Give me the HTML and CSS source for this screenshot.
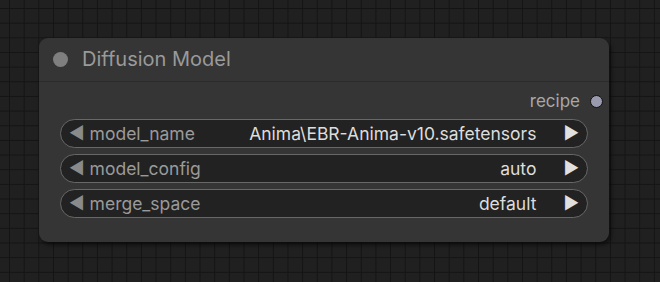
FILE: index.html
```html
<!DOCTYPE html>
<html>
<head>
<meta charset="utf-8">
<link rel="stylesheet" href="styles.css">
</head>
<body>
<div class="canvas">
  <div class="node">
    <div class="node-title">
      <span class="title-dot"></span>
      <span class="title-text">Diffusion Model</span>
    </div>
    <div class="node-body">
      <div class="output-row">
        <span class="output-label">recipe</span>
        <span class="output-slot"></span>
      </div>
      <div class="widget">
        <span class="arrow left">◀</span>
        <span class="w-name">model_name</span>
        <span class="w-value">Anima\EBR-Anima-v10.safetensors</span>
        <span class="arrow right">▶</span>
      </div>
      <div class="widget">
        <span class="arrow left">◀</span>
        <span class="w-name">model_config</span>
        <span class="w-value">auto</span>
        <span class="arrow right">▶</span>
      </div>
      <div class="widget">
        <span class="arrow left">◀</span>
        <span class="w-name">merge_space</span>
        <span class="w-value">default</span>
        <span class="arrow right">▶</span>
      </div>
    </div>
  </div>
</div>
</body>
</html>
```

FILE: styles.css
```css
html, body {
  margin: 0;
  padding: 0;
  width: 660px;
  height: 282px;
  overflow: hidden;
}
body {
  font-family: Inter, "Noto Sans", sans-serif;
  background-color: #202020;
  background-image:
    linear-gradient(to right, #141414 1px, transparent 1px),
    linear-gradient(to bottom, #141414 1px, transparent 1px);
  background-size: 14.67px 14.67px;
  background-position: 9px 8px;
}
.canvas {
  padding: 38px 0 0 39px;
}
.node {
  width: 570px;
  height: 204px;
  background: #353535;
  border-radius: 9px;
  box-shadow: 2px 3px 4px rgba(0,0,0,0.55);
  box-sizing: border-box;
}
.node-title {
  height: 44px;
  box-sizing: border-box;
  border-bottom: 1px solid #2b2b2b;
  display: flex;
  align-items: center;
  padding-left: 14px;
}
.title-dot {
  width: 15px;
  height: 15px;
  border-radius: 50%;
  background: #7f7f7f;
}
.title-text {
  margin-left: 14px;
  color: #9a9a9a;
  font-size: 20px;
  line-height: 1;
  margin-top: -1px;
}
.node-body {
  padding: 0 21px 0 21px;
}
.output-row {
  height: 37px;
  display: flex;
  align-items: center;
  justify-content: flex-end;
  margin-right: -15px;
  padding-top: 1px;
  box-sizing: border-box;
}
.output-label {
  color: #a8a8a8;
  font-size: 17px;
  margin-right: 10px;
}
.output-slot {
  width: 11px;
  height: 11px;
  border-radius: 50%;
  background: #9a9aae;
  border: 1.5px solid #111;
}
.widget {
  height: 29px;
  box-sizing: border-box;
  border: 1px solid #686868;
  border-radius: 15px;
  background: #222222;
  display: flex;
  align-items: center;
  padding: 0 8px 0 8px;
  margin-bottom: 6px;
  font-size: 17.5px;
}
.arrow {
  font-size: 17px;
  line-height: 1;
}
.arrow.left {
  color: #8a8a8a;
  margin-right: 5px;
}
.arrow.right {
  color: #e0e0e0;
  margin-left: 27px;
}
.w-name {
  color: #9a9a9a;
  flex: 1;
}
.w-value {
  color: #dddddd;
}
```
